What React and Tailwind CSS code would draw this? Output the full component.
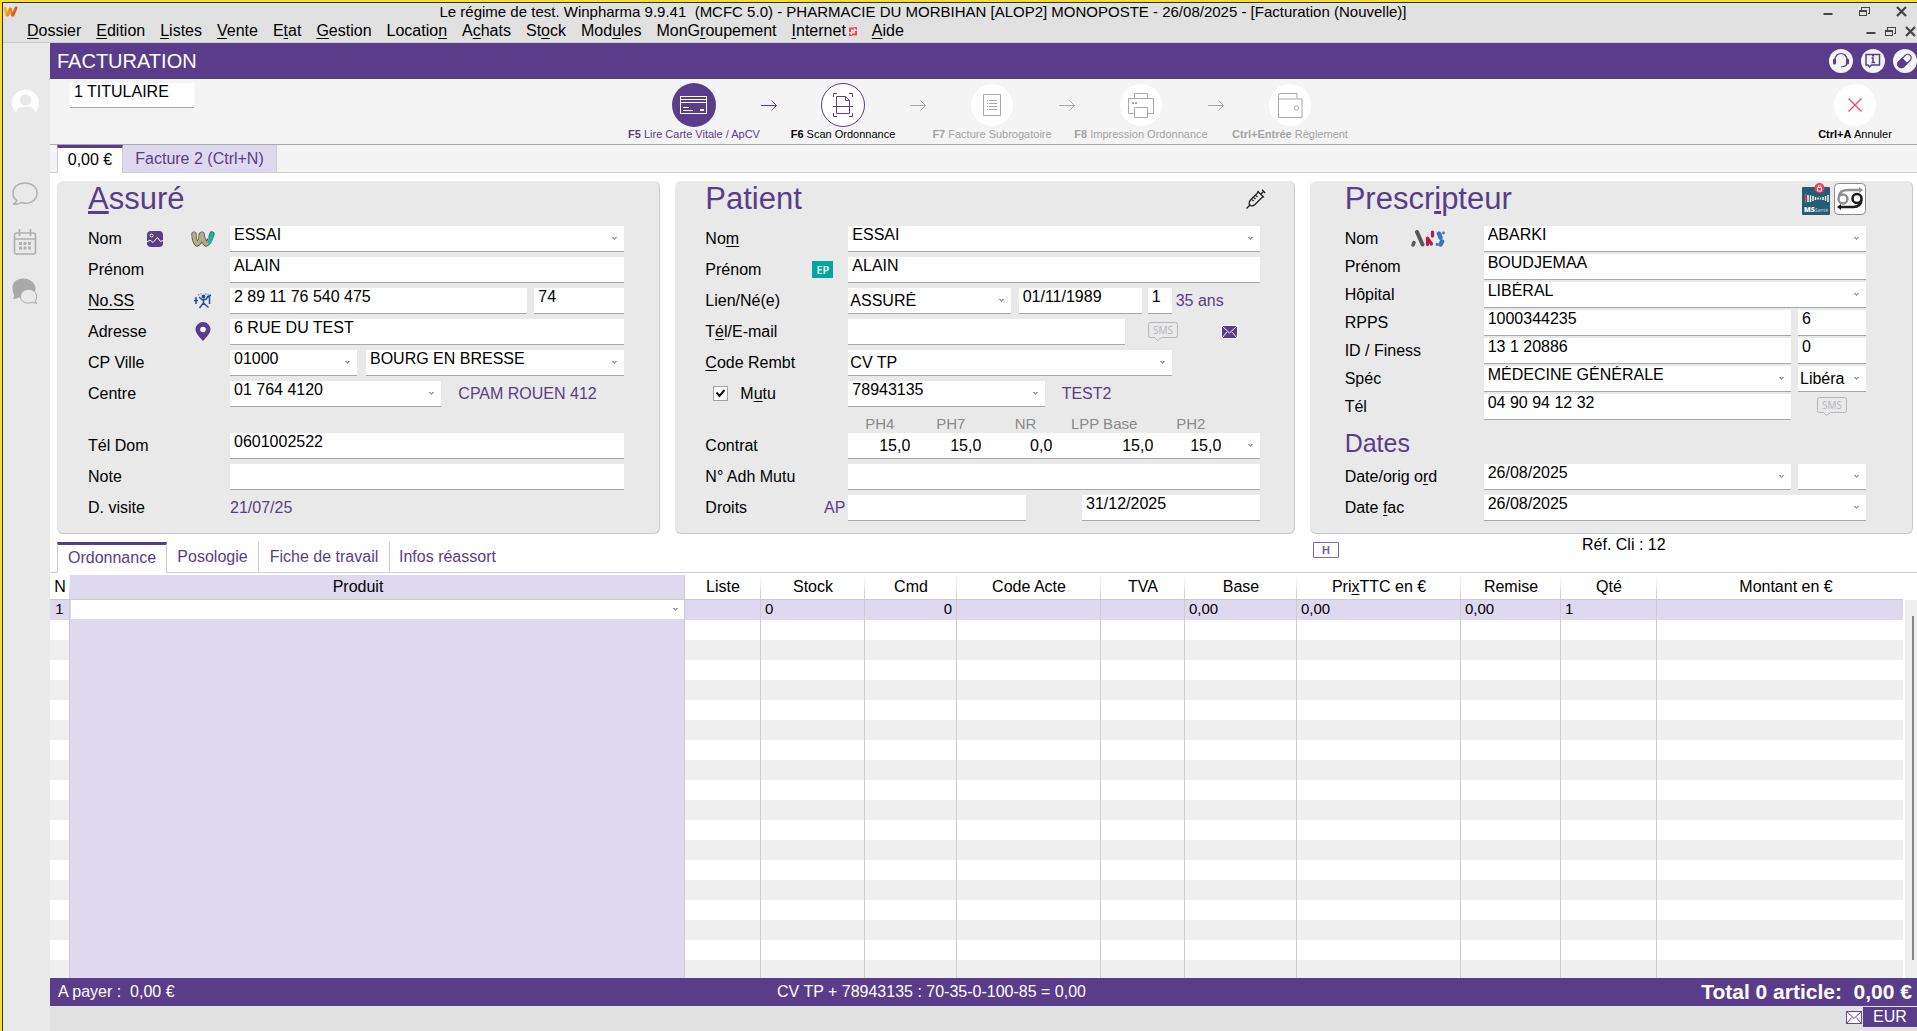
import { Fragment } from 'react';

const menus = [
  '&Dossier', '&Edition', '&Listes', '&Vente', 'E&tat', '&Gestion', 'Locatio&n',
  'A&chats', 'St&ock', 'Mod&ules', 'MonG&roupement', '&Internet', '&Aide',
];

const columns = [
  { title: 'N', width: 'w-[20px]', value: '1', cell: 'text-center' },
  { title: 'Produit', width: '', head: 'pr-[38px]' },
  { title: 'Liste', width: 'w-[76px]' },
  { title: 'Stock', width: 'w-[104px]', value: '0' },
  { title: 'Cmd', width: 'w-[92px]', value: '0', cell: 'text-right' },
  { title: 'Code Acte', width: 'w-[144px]' },
  { title: 'TVA', width: 'w-[84px]' },
  { title: 'Base', width: 'w-[112px]', value: '0,00' },
  { title: 'Pri&xTTC en €', width: 'w-[164px]', value: '0,00' },
  { title: 'Remise', width: 'w-[100px]', value: '0,00' },
  { title: 'Qté', width: 'w-[96px]', value: '1' },
  { title: 'Montant en €', width: 'w-[246px]', head: 'pl-3' },
];

const emptyRows = Array.from({ length: 18 }, (_, i) => i);

const contrat = [
  { name: 'PH4', value: '15,0', width: 'w-[62px]' },
  { name: 'PH7', value: '15,0', width: 'w-[71px]' },
  { name: 'NR', value: '0,0', width: 'w-[71px]' },
  { name: 'LPP Base', value: '15,0', width: 'w-[101px]' },
  { name: 'PH2', value: '15,0', width: 'w-[68px]' },
];

// "&" marks the keyboard shortcut letter, as in the menu definitions
function Mnemonic({ text }) {
  const at = text.indexOf('&');
  if (at < 0) return <Fragment>{text}</Fragment>;
  return (
    <Fragment>
      {text.slice(0, at)}
      <u className="underline-offset-2">{text[at + 1]}</u>
      {text.slice(at + 2)}
    </Fragment>
  );
}

function Row({ id, label, width = 'w-[142px]', icon, lead, labelClass = '', children }) {
  return (
    <div className="flex items-center h-[26px]">
      <div className={`${width} shrink-0 flex items-center pb-px`}>
        {lead}
        <label htmlFor={id} className={`whitespace-nowrap ${labelClass}`}>
          <Mnemonic text={label} />
        </label>
        {icon}
      </div>
      <div className="flex flex-1 min-w-0 items-center">{children}</div>
    </div>
  );
}

function Field({ id, value = '', className = 'flex-1', label }) {
  return (
    <input
      id={id}
      aria-label={label}
      defaultValue={value}
      className={`min-w-0 h-[26px] bg-white border-b border-[#a5a8b0] px-1 pb-[7px] outline-none ${className}`}
    />
  );
}

function Arrow({ className = 'right-[7px] top-[11px]' }) {
  return (
    <svg className={`absolute w-[5px] h-[4px] pointer-events-none ${className}`} viewBox="0 0 5 4" shapeRendering="crispEdges">
      <path d="M0 0h2v1h1v-1h2v1h-1v1h-1v1h-1v-1h-1v-1h-1z" fill="#a0a0a0" />
    </svg>
  );
}

function Combo({ id, value = '', className = 'flex-1', label, centered = false }) {
  return (
    <div className={`relative min-w-0 h-[26px] ${className}`}>
      <select
        id={id}
        aria-label={label}
        className={`block appearance-none w-full h-[26px] bg-white border-b border-[#a5a8b0] pr-[21px] outline-none leading-[18px] ${centered ? 'pl-[2px]' : 'pl-1 pb-[7px]'}`}
      >
        <option>{value}</option>
      </select>
      <Arrow />
    </div>
  );
}

function Sms() {
  return (
    <svg className="w-[30px] h-[20px]" viewBox="0 0 30 20" fill="none" stroke="#b4b6bc">
      <path d="M2.5.5h25q2 0 2 2v11q0 2-2 2h-14l-4 3-3-3h-4q-2 0-2-2v-11q0-2 2-2z" />
      <text x="15" y="12" textAnchor="middle" fontSize="10" fill="#b4b6bc" stroke="none" fontFamily="Open Sans">SMS</text>
    </svg>
  );
}

function Envelope({ className, bg, line, flap }) {
  return (
    <svg className={className} viewBox="0 0 17 14">
      <rect x=".5" y=".5" width="16" height="13" fill={bg} stroke={line} />
      <path d="M1 1l7.500 7 7.500-7M1 13l5-6M16 13l-5-6" fill="none" stroke={flap} />
    </svg>
  );
}

function Panel({ title, className, actions, children }) {
  return (
    <section className={`min-w-0 bg-[#e9e9e9] rounded-md border-r border-b border-[#c8c8c8] pb-[12px] ${className}`}>
      <div className="flex justify-between h-[45px]">
        <h2 className="text-[31px] leading-[36px] text-[#5a3d8a]"><Mnemonic text={title} /></h2>
        {actions}
      </div>
      {children}
    </section>
  );
}

function StepArrow({ color }) {
  return (
    <svg className="w-4 h-3 mt-[17px] shrink-0" viewBox="0 0 16 12" fill="none" stroke={color}>
      <path d="M0 5.500h15.500M10.500 .5l5 5-5 5" />
    </svg>
  );
}

function Step({ shortcut, label, tone, circle, children }) {
  return (
    <button className={`w-[133px] shrink-0 flex flex-col items-center text-[11px] leading-[14px] whitespace-nowrap ${tone}`}>
      <span className={`w-[44px] h-[44px] rounded-full flex items-center justify-center ${circle}`}>{children}</span>
      <span><b>{shortcut}</b> {label}</span>
    </button>
  );
}

function WindowButtons({ className }) {
  return (
    <div className={`flex items-center ${className}`}>
      <button aria-label="Réduire">
        <svg className="w-[10px] h-[12px]" viewBox="0 0 10 12"><path d="M.5 8h9" stroke="#444" strokeWidth="2" /></svg>
      </button>
      <button aria-label="Restaurer">
        <svg className="w-[11px] h-[11px]" viewBox="0 0 11 11" fill="none" stroke="#444" shapeRendering="crispEdges">
          <path d="M.5 4.500h7v5h-7zM.5 5.500h7M2.500 4v-3h8v6h-2M2.500 1.500h8" />
        </svg>
      </button>
      <button aria-label="Fermer">
        <svg className="w-[11px] h-[11px]" viewBox="0 0 11 11" stroke="#444" strokeWidth="2.200"><path d="M1 1l9 9M10 1l-9 9" /></svg>
      </button>
    </div>
  );
}

function TitleBar() {
  return (
    <header className="bg-[#e1e1e1] border-b border-[#ccc]">
      <div className="flex items-center h-[17px]">
        <svg className="w-[15px] h-[11px] shrink-0" viewBox="0 0 15 11" fill="none" strokeLinecap="round" strokeWidth="3">
          <path d="M2 2l2 7" stroke="#f9b233" />
          <path d="M4.500 9l3-6" stroke="#f39322" />
          <path d="M7 3l2.500 6" stroke="#ef8224" />
          <path d="M10 9l3-7" stroke="#d9601f" />
        </svg>
        <h1 className="flex-1 pl-[5px] text-center text-[15px] leading-[17px] whitespace-pre">
          Le régime de test. Winpharma 9.9.41  (MCFC 5.0) - PHARMACIE DU MORBIHAN [ALOP2] MONOPOSTE - 26/08/2025 - [Facturation (Nouvelle)]
        </h1>
        <WindowButtons className="gap-[26px] pr-[10px]" />
      </div>
      <nav className="flex items-center h-[22px] pl-6">
        <ul className="flex-1 flex gap-[15px] leading-[22px]">
          {menus.map((m) => (
            <li key={m} className="flex items-center">
              <a href="#"><Mnemonic text={m} /></a>
              {m === '&Internet' && (
                <svg className="ml-[3px] w-[8px] h-[9px]" viewBox="0 0 8 9" fill="none" stroke="#f0484e" strokeWidth="2">
                  <path d="M1 5v-3.500h4M7 4v3.500h-4" />
                  <path d="M4.500 0h3.500v3.500zM3.500 9h-3.500v-3.500z" fill="#f0484e" stroke="none" />
                </svg>
              )}
            </li>
          ))}
        </ul>
        <WindowButtons className="gap-[9px] pr-px" />
      </nav>
    </header>
  );
}

function SideBar() {
  return (
    <aside className="w-[47px] shrink-0 bg-[#e9e9e9] flex flex-col items-center pt-[46px] pr-[3px]">
      <button aria-label="Compte">
        <svg className="block w-[27px] h-[25px]" viewBox="0 0 27 25">
          <path d="M4 23.500a13.500 13.500 0 1 1 19 0q-1-5-5-5.500h-9q-4 .5-5 5.500z" fill="#fff" />
          <circle cx="13.500" cy="11" r="5.800" fill="#e9e9e9" />
        </svg>
      </button>
      <button aria-label="Messages" className="mt-[68px]">
        <svg className="block w-[26px] h-[24px]" viewBox="0 0 26 24" fill="none" stroke="#b0b0b0" strokeWidth="1.500">
          <path d="M5 18.500q-1.500 3-4 3.500q5 .8 8-1.500c8 2.500 16-1.500 16-9.500c0-6-5-10-12-10s-12 4-12 10c0 3.500 1.500 6 4 7.500z" />
        </svg>
      </button>
      <button aria-label="Agenda" className="mt-[23px]">
        <svg className="block w-[24px] h-[26px]" viewBox="0 0 24 26" fill="none" stroke="#b0b0b0" strokeWidth="1.600">
          <rect x="1.500" y="4" width="21" height="21" rx="2" />
          <path d="M1.500 10h21M6.500 0v7M17.500 0v7" />
          <path d="M6 14.500h3M10.500 14.500h3M15 14.500h3M6 19h3M10.500 19h3M15 19h3" strokeWidth="3" />
        </svg>
      </button>
      <button aria-label="Discussions" className="mt-[23px]">
        <svg className="block w-[26px] h-[26px]" viewBox="0 0 26 26">
          <path d="M2 17q0 3-1.500 4q4 0 6-1.500h6l11-7c1-7-5-12-12-12c-7 0-11 4-11 9c0 3 .5 5 1.500 7.500z" fill="#a9a9a9" />
          <path d="M16.500 11.500c5 0 8 3 8 7c0 2-.5 3.500-1.500 4.500q.5 1.500 2 2q-3 .5-4.500-.8c-7 2.500-12-1-12-5.700c0-4 3-7 8-7z" fill="#e9e9e9" stroke="#a9a9a9" />
        </svg>
      </button>
    </aside>
  );
}

function HeaderBar() {
  return (
    <div className="flex items-center justify-between h-9 bg-[#5a3d8a] pl-[7px]">
      <h2 className="text-[20px] text-white">FACTURATION</h2>
      <div className="flex gap-2">
        <button aria-label="Assistance" className="w-6 h-6 rounded-full bg-[#f4f4f8]">
          <svg className="w-6 h-6" viewBox="0 0 24 24" fill="none" stroke="#5a3d8a" strokeWidth="1.200">
            <path d="M6 12v-1.500a6 6 0 0 1 12 0v3.500q0 3.500-6 4" />
            <path d="M5.500 11v3M18.500 11v3" strokeWidth="3" strokeLinecap="round" />
          </svg>
        </button>
        <button aria-label="Informations" className="w-6 h-6 rounded-full bg-[#f4f4f8]">
          <svg className="w-6 h-6" viewBox="0 0 24 24" fill="none" stroke="#5a3d8a" strokeWidth="1.500">
            <path d="M5 5.500h13.500v10.500h-8l-2 2-1.500-2h-2z" />
            <path d="M10.500 9h1.500v4.500M10.500 13.500h3.500M11 6.800h2" />
          </svg>
        </button>
        <button aria-label="Médicaments" className="w-6 h-6 rounded-full bg-[#f4f4f8]">
          <svg className="w-6 h-6" viewBox="0 0 24 24" stroke="#5a3d8a" strokeWidth="1.300">
            <g transform="rotate(-45 11.500 12)">
              <rect x="3.500" y="8.500" width="16" height="7" rx="3.500" fill="none" />
              <path d="M11.500 8.500h-4.500a3.500 3.500 0 0 0 0 7h4.500z" fill="#5a3d8a" />
            </g>
          </svg>
        </button>
      </div>
    </div>
  );
}

function Toolbar() {
  const off = 'text-[#a3a3a3]';
  return (
    <div className="flex h-[66px] pt-1 bg-[#f4f4f4] border-b border-[#a5a8b0]">
      <div className="w-36 pl-5">
        <input aria-label="Opérateur" defaultValue="1 TITULAIRE" className="block w-full h-[25px] bg-white border-b border-[#a5a8b0] pl-1 pb-[6px] outline-none" />
      </div>
      <div className="flex-1 flex justify-center pr-[3px]">
        <Step shortcut="F5" label="Lire Carte Vitale / ApCV" tone="text-[#5a3d8a]" circle="bg-[#5a3d8a]">
          <svg className="w-[28px] h-[20px]" viewBox="0 0 28 20" fill="none" stroke="#fff" shapeRendering="crispEdges">
            <rect x=".5" y="1.500" width="26" height="17" />
            <path d="M1 4.500h25M1 7.500h25M3 12.500h6M3 15.500h10M20 14.500h4M20 15.500h4" />
          </svg>
        </Step>
        <StepArrow color="#5a3d8a" />
        <Step shortcut="F6" label="Scan Ordonnance" tone="text-black" circle="bg-white border border-[#5a3d8a]">
          <svg className="w-[20px] h-[24px]" viewBox="0 0 20 24" fill="none" stroke="#5a3d8a">
            <path d="M.5 4v-3.500h3.500M16 .5h3.500v3.500M.5 20v3.500h3.500M16 23.500h3.500v-3.500M0 13.500h20M3.500 3.500h9l4 4v13h-13zM12.500 3.500v4h4" />
          </svg>
        </Step>
        <StepArrow color="#a5a8b0" />
        <Step shortcut="F7" label="Facture Subrogatoire" tone={off} circle="bg-white border border-[#f4f4f4]">
          <svg className="w-[18px] h-[22px]" viewBox="0 0 18 22" fill="none" stroke="#a5a8b0">
            <path d="M.5.5h17v21h-17zM4 6.500h1M6 6.500h8M4 9.500h1M6 9.500h8M4 12.500h1M6 12.500h8M4 15.500h1M6 15.500h8" />
          </svg>
        </Step>
        <StepArrow color="#a5a8b0" />
        <Step shortcut="F8" label="Impression Ordonnance" tone={off} circle="bg-white border border-[#f4f4f4]">
          <svg className="w-[26px] h-[25px]" viewBox="0 0 26 25" fill="none" stroke="#a5a8b0">
            <path d="M6.500 5.500v-5h13v5M6.500 20.500h-6v-15h25v15h-6M6.500 14.500h13v10h-13z" />
            <path d="M4 10h2M7 10h2" strokeWidth="2" />
          </svg>
        </Step>
        <StepArrow color="#a5a8b0" />
        <Step shortcut="Ctrl+Entrée" label="Règlement" tone={off} circle="bg-white border border-[#f4f4f4]">
          <svg className="w-[25px] h-[25px]" viewBox="0 0 25 25" fill="none" stroke="#a5a8b0">
            <path d="M.5 6v18.500h23.500v-18.500zM.5 6v-3.500q0-2 2-2h16.500v5" />
            <circle cx="18.500" cy="15" r="2.200" />
          </svg>
        </Step>
      </div>
      <div className="w-[124px] flex justify-center">
        <Step shortcut="Ctrl+A" label="Annuler" tone="text-black" circle="bg-white border border-[#f4f4f4]">
          <svg className="w-[14px] h-[14px]" viewBox="0 0 14 14" stroke="#f0484e" strokeWidth="1.300"><path d="M.5.5l13 13M13.500.5l-13 13" /></svg>
        </Step>
      </div>
    </div>
  );
}

function Assure() {
  const slot = 'ml-auto mr-[15px] w-6 flex justify-center';
  return (
    <Panel title="&Assuré" className="pl-[31px] pr-[35px]">
      <div className="flex flex-col gap-[5px]">
        <Row
          id="a-nom"
          label="Nom"
          icon={
            <>
              <svg className="ml-[25px] w-4 h-4" viewBox="0 0 16 16">
                <rect width="16" height="16" rx="4" fill="#5a3d8a" />
                <circle cx="4.500" cy="4.500" r="1.500" fill="none" stroke="#fff" />
                <path d="M0 11l3-2 3 2.500 4.500-5 3 4 2.500-1" fill="none" stroke="#fff" />
              </svg>
              <svg className="ml-auto mr-[15px] w-6 h-4" viewBox="0 0 24 16" fill="none" strokeLinecap="round">
                <g stroke="#4a4a40" strokeWidth="5.200"><path d="M3 3q0 7 3 10" /><path d="M7.500 12q3-3 2.500-8" /><path d="M11 3q1 7 4 10" /><path d="M16.500 12q3.500-4 4.500-9" /></g>
                <path d="M7.500 12q3-3 2.500-8" stroke="#b5ac8c" strokeWidth="3.800" />
                <path d="M3 3q0 7 3 10M11 3q1 7 4 10" stroke="#b5ac8c" strokeWidth="3.800" />
                <path d="M16.500 12q3-2 2.500-5" stroke="#b5ac8c" strokeWidth="3.800" />
                <path d="M18.500 11q2-4 2.500-8" stroke="#19b3ab" strokeWidth="4" />
              </svg>
            </>
          }
        >
          <Combo id="a-nom" value="ESSAI" />
        </Row>
        <Row id="a-prenom" label="Prénom"><Field id="a-prenom" value="ALAIN" /></Row>
        <Row
          id="a-noss"
          label="No.SS"
          labelClass="underline underline-offset-3"
          icon={
            <span className={slot}>
              <svg className="w-[18px] h-[16px]" viewBox="0 0 18 16" fill="none" stroke="#1b4fa0" strokeWidth="1.500">
                <path d="M2 4v7M0 7.500h4M15.500 3v8M13 4l4-2M7 6.500h5M9.500 6v4l-4 5M9.500 10l5 4.500M5 4l3 2.500M12 6.500l2-3" />
                <circle cx="9.500" cy="3.500" r="1.200" fill="#1b4fa0" />
                <path d="M4 2l4-1.500M11 .8l4 1" stroke="#6fa3d8" strokeDasharray="1.500 1" />
              </svg>
            </span>
          }
        >
          <Field id="a-noss" value="2 89 11 76 540 475" />
          <Field label="Clé" value="74" className="w-[90px] ml-[7px]" />
        </Row>
        <Row
          id="a-adresse"
          label="Adresse"
          icon={
            <span className={slot}>
              <svg className="w-[16px] h-[19px]" viewBox="0 0 16 19">
                <path d="M8 0a7.500 7.500 0 0 1 7.500 7.500q0 4-7.500 11.500q-7.500-7.500-7.500-11.500a7.500 7.500 0 0 1 7.500-7.500z" fill="#5a3d8a" />
                <circle cx="8" cy="7.500" r="2.800" fill="#fff" />
              </svg>
            </span>
          }
        >
          <Field id="a-adresse" value="6 RUE DU TEST" />
        </Row>
        <Row id="a-cp" label="CP Ville">
          <Combo id="a-cp" value="01000" className="w-[127px]" />
          <Combo label="Ville" value="BOURG EN BRESSE" className="flex-1 ml-[9px]" />
        </Row>
        <Row id="a-centre" label="Centre">
          <Combo id="a-centre" value="01 764 4120" className="flex-1" />
          <span className="w-[183px] pl-[17px] pb-px text-[#5a3d8a] whitespace-nowrap">CPAM ROUEN 412</span>
        </Row>
        <div className="h-4" />
        <Row id="a-tel" label="Tél Dom"><Field id="a-tel" value="0601002522" /></Row>
        <Row id="a-note" label="Note"><Field id="a-note" /></Row>
        <Row label="D. visite"><span className="pb-px text-[#5a3d8a]">21/07/25</span></Row>
      </div>
    </Panel>
  );
}

function Patient() {
  const w = 'w-[143px]';
  return (
    <Panel
      title="Patient"
      className="pl-[30px] pr-[34px]"
      actions={
        <button aria-label="Vaccination" className="self-start mt-2 mr-[-6px]">
          <svg className="block w-[20px] h-[20px]" viewBox="0 0 20 20" fill="none" stroke="#222" strokeWidth="1.300">
            <path d="M.5 19.500l4-4M3.500 16.500q-1-3.500 1-5.500l8-8 4.500 4.500-8 8q-2 2-5.500 1zM11.500 2l6.500 6.500M15 5l2.500-2.500M16 .8l3.200 3.200M9.500 6l2 2M7.500 8l2 2M5.500 10l2 2" />
          </svg>
        </button>
      }
    >
      <div className="flex flex-col gap-[5px]">
        <Row id="p-nom" label="No&m" width={w}><Combo id="p-nom" value="ESSAI" /></Row>
        <Row
          id="p-prenom"
          label="Prénom"
          width={w}
          icon={<span className="ml-auto mr-[15px] w-[21px] h-[17px] bg-[#00a79f] text-white text-[11px] leading-[18px] font-semibold text-center font-['Open_Sans',sans-serif]">EP</span>}
        >
          <Field id="p-prenom" value="ALAIN" />
        </Row>
        <Row id="p-lien" label="Lien/Né(e)" width={w}>
          <Combo id="p-lien" value="ASSURÉ" centered />
          <Field label="Date de naissance" value="01/11/1989" className="w-[123px] ml-2" />
          <Field label="Rang" value="1" className="w-6 ml-[6px]" />
          <span className="w-[88px] pl-1 pb-px text-[#5a3d8a]">35 ans</span>
        </Row>
        <Row id="p-tel" label="T&él/E-mail" width={w}>
          <Field id="p-tel" />
          <button aria-label="Envoyer un SMS" className="ml-[23px]"><Sms /></button>
          <button aria-label="Envoyer un e-mail" className="ml-[43px] mr-[22px]">
            <Envelope className="w-[17px] h-[14px]" bg="#5a3d8a" line="#f5f5f5" flap="#f5f5f5" />
          </button>
        </Row>
        <Row id="p-code" label="&Code Rembt" width={w}>
          <Combo id="p-code" value="CV TP" centered className="flex-1 mr-[88px]" />
        </Row>
        <Row
          id="p-mutu"
          label="M&utu"
          width={w}
          lead={
            <span className="relative w-[15px] h-[15px] ml-[8px] mr-3">
              <input id="p-mutu" type="checkbox" defaultChecked className="peer block appearance-none w-[15px] h-[15px] bg-white border border-[#a0a0a0]" />
              <svg className="absolute left-[3px] top-[3px] w-[9px] h-[9px] pointer-events-none hidden peer-checked:block" viewBox="0 0 9 9" fill="none" stroke="#111" strokeWidth="2">
                <path d="M.5 3.500l3 3.500 5-6" />
              </svg>
            </span>
          }
        >
          <Combo label="Numéro de mutuelle" value="78943135" />
          <span className="w-[215px] pl-[17px] pb-px text-[#5a3d8a]">TEST2</span>
        </Row>
        <div className="flex h-4 pl-[143px] text-[15px] leading-6 text-[#8a8a8a] text-right">
          {contrat.map((c) => (
            <label key={c.name} htmlFor={`p-${c.name}`} className={`${c.width} pr-4 whitespace-nowrap`}>{c.name}</label>
          ))}
        </div>
        <Row id="p-PH4" label="Contrat" width={w}>
          <div className="relative flex-1 min-w-0 flex h-[26px] bg-white border-b border-[#a5a8b0]">
            {contrat.map((c) => (
              <input key={c.name} id={`p-${c.name}`} defaultValue={c.value} className={`${c.width} text-right outline-none`} />
            ))}
            <Arrow />
          </div>
        </Row>
        <Row id="p-adh" label="N° Adh Mutu" width={w}><Field id="p-adh" /></Row>
        <Row id="p-droits" label="Droits" width={w} icon={<span className="ml-auto mr-[3px] text-[#5a3d8a]">AP</span>}>
          <Field id="p-droits" />
          <Field label="Fin de droits" value="31/12/2025" className="flex-1 ml-[56px]" />
        </Row>
      </div>
    </Panel>
  );
}

function Prescripteur() {
  const w = 'w-[139px]';
  return (
    <Panel
      title="Prescr&ipteur"
      className="pl-[35px] pr-[46px]"
      actions={
        <div className="flex gap-1 pt-[2px]">
          <button aria-label="MSSanté" className="self-start">
            <svg className="block w-[28px] h-[32px]" viewBox="0 0 28 32">
              <rect y="4" width="28" height="28" rx="1" fill="#265d72" />
              <g stroke="#fff" strokeWidth="1.400">
                <path d="M6 12v7M8.500 12.500v6.500M11 13v5M13.500 14v3M16 14.500v2M18.500 14.500v2M21 14v3M23.500 13v5M26 12v7" />
                <path d="M3.500 11v9" stroke="#e5405c" />
              </g>
              <text x="2" y="29" fontSize="7" fontFamily="Open Sans" fontWeight="800" fill="#fff">MS</text>
              <text x="13" y="29" fontSize="5" fontFamily="Open Sans" fill="#c8dbe2">Santé</text>
              <circle cx="17.500" cy="5" r="5" fill="#e5405c" />
              <path d="M15.500 4.500h4v3.500h-4zM16.300 4.500v-1.500q1.200-1.500 2.400 0v1.500" fill="none" stroke="#fff" strokeWidth=".9" />
            </svg>
          </button>
          <button aria-label="Dossier patient" className="self-start">
            <svg className="block w-[32px] h-[32px]" viewBox="0 0 32 32" fill="none" strokeWidth="2.600">
              <rect x=".5" y=".5" width="31" height="31" rx="4" fill="#fff" stroke="#8b8b8b" strokeWidth="1" />
              <circle cx="9" cy="16" r="4.500" stroke="#8e9096" />
              <path d="M5 13q1-6 9-6h12" stroke="#8e9096" />
              <path d="M25 4l4 3-4 3z" fill="#8e9096" stroke="none" />
              <circle cx="23" cy="15.500" r="4.500" stroke="#1c1c1c" />
              <path d="M27.500 17q-1 7-8 7h-13" stroke="#1c1c1c" />
              <path d="M7 21l-4 3 4 3z" fill="#1c1c1c" stroke="none" />
            </svg>
          </button>
        </div>
      }
    >
      <div className="flex flex-col gap-[2px]">
        <Row
          id="m-nom"
          label="Nom"
          width={w}
          icon={
            <svg className="ml-auto mr-[39px] w-[34px] h-[17px]" viewBox="0 0 34 17" fill="none" strokeLinecap="round">
              <path d="M6 2l5.500 12.500" stroke="#58595b" strokeWidth="4" />
              <path d="M2 15l1-2.500" stroke="#58595b" strokeWidth="3.500" />
              <path d="M16.500 8v6.500M21.500 2v4M17 9l3.500 5" stroke="#c0144c" strokeWidth="3.200" />
              <path d="M28 3.500l1.500 4M31 11.500l-1.500 3" stroke="#3a74b8" strokeWidth="4.500" />
              <path d="M32.500 3v0M26 14.500v0" stroke="#3a74b8" strokeWidth="2.800" />
            </svg>
          }
        >
          <Combo id="m-nom" value="ABARKI" />
        </Row>
        <Row id="m-prenom" label="Prénom" width={w}><Field id="m-prenom" value="BOUDJEMAA" /></Row>
        <Row id="m-hop" label="Hôpital" width={w}><Combo id="m-hop" value="LIBÉRAL" /></Row>
        <Row id="m-rpps" label="RPPS" width={w}>
          <Field id="m-rpps" value="1000344235" />
          <Field label="Clé RPPS" value="6" className="w-[68px] ml-[7px]" />
        </Row>
        <Row id="m-id" label="ID / Finess" width={w}>
          <Field id="m-id" value="13 1 20886" />
          <Field label="Clé Finess" value="0" className="w-[68px] ml-[7px]" />
        </Row>
        <Row id="m-spec" label="Spéc" width={w}>
          <Combo id="m-spec" value="MÉDECINE GÉNÉRALE" />
          <Combo label="Mode d'exercice" value="Libéral" centered className="w-[68px] ml-[7px]" />
        </Row>
        <Row id="m-tel" label="Tél" width={w}>
          <Field id="m-tel" value="04 90 94 12 32" />
          <button aria-label="Envoyer un SMS" className="ml-[26px] mr-[19px]"><Sms /></button>
        </Row>
      </div>
      <h2 className="h-[44px] pt-[2px] text-[25px] leading-[42px] text-[#5a3d8a]">Dates</h2>
      <div className="flex flex-col gap-[5px]">
        <Row id="m-ord" label="Date/orig o&rd" width={w}>
          <Combo id="m-ord" value="26/08/2025" />
          <Combo label="Origine" className="w-[68px] ml-[7px]" />
        </Row>
        <Row id="m-fac" label="Date &fac" width={w}><Combo id="m-fac" value="26/08/2025" /></Row>
      </div>
    </Panel>
  );
}

function SubTabs() {
  return (
    <div className="flex h-[31px]">
      <div className="w-[7px] border-b border-[#ccc]" />
      <button className="w-[110px] pb-[3px] border-x border-[#ccc] border-t-3 border-t-[#5a3d8a] text-[#5a3d8a]">Ordonnance</button>
      <button className="w-[92px] border-r border-b border-[#ccc] text-[#5a3d8a]">Posologie</button>
      <button className="w-[131px] border-r border-b border-[#ccc] text-[#5a3d8a]">Fiche de travail</button>
      <button className="px-[9px] border-b border-[#ccc] text-[#5a3d8a]">Infos réassort</button>
      <div className="flex-1 flex justify-end border-b border-[#ccc]">
        <div className="w-[604px] flex items-start">
          <button aria-label="Historique" className="w-[26px] h-4 border border-[#8266b4] rounded-[1px] text-[11px] leading-[14px] font-bold text-[#7a5cae]">H</button>
          <p className="ml-[243px] mt-[-9px] leading-6">Réf. Cli : 12</p>
        </div>
      </div>
    </div>
  );
}

function Lines() {
  return (
    <div className="flex-1 min-h-0 flex pt-[2px] overflow-hidden">
      <div className="flex-1 min-w-0 overflow-hidden">
        <table className="w-full table-fixed border-separate border-spacing-0">
          <colgroup>
            {columns.map((c) => <col key={c.title} className={c.width} />)}
          </colgroup>
          <thead>
            <tr>
              {columns.map((c, i) => (
                <th
                  key={c.title}
                  className={`h-[25px] p-0 font-normal leading-6 whitespace-nowrap border-b border-[#ccc] ${c.head || ''} ${i === 1 ? 'bg-[#dfd9f0] border-r' : i < columns.length - 1 ? 'bg-linear-to-b from-white to-[#ccc] bg-size-[1px_100%] bg-right bg-no-repeat' : ''}`}
                >
                  <Mnemonic text={c.title} />
                </th>
              ))}
            </tr>
          </thead>
          <tbody>
            <tr className="bg-[#dfd9f0]">
              {columns.map((c, i) => (
                <td
                  key={c.title}
                  className={`h-5 p-0 text-[15px] leading-[17px] align-top border-[#ccc] ${i < columns.length - 1 ? 'border-r' : ''} ${c.cell || ''}`}
                >
                  {i === 1 ? (
                    <div className="relative h-[19px] pl-px">
                      <select aria-label="Produit" className="block appearance-none w-full h-[19px] bg-white outline-none"><option></option></select>
                      <Arrow className="right-[6px] top-[8px]" />
                    </div>
                  ) : (
                    <span className={i > 0 ? 'px-1' : ''}>{c.value}</span>
                  )}
                </td>
              ))}
            </tr>
            {emptyRows.map((r) => (
              <tr key={r} className={r % 2 ? 'bg-[#efefef]' : 'bg-white'}>
                {columns.map((c, i) => (
                  <td key={c.title} className={`h-5 p-0 border-[#ccc] ${i === 1 ? 'bg-[#dfd9f0]' : ''} ${i < columns.length - 1 ? 'border-r' : ''}`} />
                ))}
              </tr>
            ))}
          </tbody>
        </table>
      </div>
      <div className="w-[12px] ml-[2px] mt-[25px] bg-[#efefef] pt-4 pb-[18px] pl-[7px]">
        <div className="w-[2px] h-full bg-[#858585]" />
      </div>
    </div>
  );
}

function App() {
  return (
    <div className="h-screen overflow-hidden flex flex-col border-t-2 border-l-2 border-[#fddc2e] bg-white text-black text-[16px] font-['Liberation_Sans',Arial,sans-serif]">
      <div className="flex-1 min-h-0 flex flex-col border-t border-l border-[#333]">
        <TitleBar />
        <div className="flex-1 min-h-0 flex">
          <SideBar />
          <main className="flex-1 min-w-0 flex flex-col">
            <HeaderBar />
            <Toolbar />
            <div className="flex h-7 bg-[#f4f4f4]">
              <div className="w-[7px] border-b border-[#ccc]" />
              <button className="w-[66px] pb-1 bg-white border-x border-[#ccc] border-t-3 border-t-[#5a3d8a]">0,00 €</button>
              <button className="w-[154px] bg-[#dfd9f0] border-r border-b border-[#ccc] text-[#5a3d8a]">Facture 2 (Ctrl+N)</button>
              <div className="flex-1 border-b border-[#ccc]" />
            </div>
            <div className="grid grid-cols-[603fr_619fr_603fr] gap-[15px] pt-2 pl-[7px] pr-1 pb-2">
              <Assure />
              <Patient />
              <Prescripteur />
            </div>
            <SubTabs />
            <Lines />
            <footer className="shrink-0">
              <div className="grid grid-cols-3 items-center h-7 bg-[#5a3d8a] text-white pl-2 pr-[5px] pb-px">
                <p className="whitespace-pre">A payer :  0,00 €</p>
                <p className="whitespace-nowrap pl-[101px]">CV TP + 78943135 : 70-35-0-100-85 = 0,00</p>
                <p className="text-[21px] leading-6 font-bold text-right whitespace-pre">Total 0 article:  0,00 €</p>
              </div>
              <div className="flex justify-end items-center h-[25px] bg-[#e1e1e1] pb-[3px]">
                <Envelope className="w-[16px] h-[13px] mr-px" bg="#fff" line="#5a3d8a" flap="#5a3d8a" />
                <button className="w-[54px] h-5 bg-[#5a3d8a] text-white leading-5">EUR</button>
              </div>
            </footer>
          </main>
        </div>
      </div>
    </div>
  );
}

export default App;
